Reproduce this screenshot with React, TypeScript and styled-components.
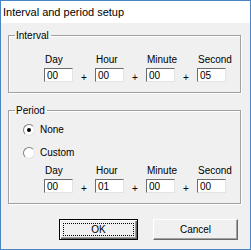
import { Fragment } from 'react';
import styled, { createGlobalStyle } from 'styled-components';

const GlobalStyle = createGlobalStyle`
    html, body {
        margin: 0;
        padding: 0;
        background: #ffffff;
    }
`

type Field = { label: string, value: string }

const intervalFields: Field[] = [
    { label: 'Day', value: '00' },
    { label: 'Hour', value: '00' },
    { label: 'Minute', value: '00' },
    { label: 'Second', value: '05' },
]

const periodFields: Field[] = [
    { label: 'Day', value: '00' },
    { label: 'Hour', value: '01' },
    { label: 'Minute', value: '00' },
    { label: 'Second', value: '00' },
]

const TimeRow = ({ fields }: { fields: Field[] }) => (
    <Row>
        {fields.map((f, i) => (
            <Fragment key={f.label}>
                {i > 0 && <Plus>+</Plus>}
                <FieldCol>
                    <FieldLabel>{f.label}</FieldLabel>
                    <TextBox defaultValue={f.value} />
                </FieldCol>
            </Fragment>
        ))}
    </Row>
)

export default function App() {
    return (
        <>
            <GlobalStyle />
            <Window>
                <TitleBar>Interval and period setup</TitleBar>
                <Body>
                    <Group>
                        <Legend>Interval</Legend>
                        <GroupInner $top={11}>
                            <TimeRow fields={intervalFields} />
                        </GroupInner>
                    </Group>
                    <Group $gap={11}>
                        <Legend>Period</Legend>
                        <GroupInner $top={6}>
                            <RadioRow>
                                <Radio $checked />
                                None
                            </RadioRow>
                            <RadioRow $gap={10}>
                                <Radio />
                                Custom
                            </RadioRow>
                            <Spacer />
                            <TimeRow fields={periodFields} />
                        </GroupInner>
                    </Group>
                    <ButtonBar>
                        <Button $default $width={79}><FocusRing>OK</FocusRing></Button>
                        <Button $width={85}>Cancel</Button>
                    </ButtonBar>
                </Body>
            </Window>
        </>
    )
}

const Window = styled.div`
    width: 251px;
    height: 250px;
    box-sizing: border-box;
    border: 1px solid #4a86c4;
    background: #f0f0f0;
    display: flex;
    flex-direction: column;
    font-family: "Liberation Sans", Arial, sans-serif;
    font-size: 10px;
    color: #000;
`

const TitleBar = styled.div`
    height: 22px;
    background: #ffffff;
    display: flex;
    align-items: center;
    padding-left: 2px;
    font-size: 11px;
`

const Body = styled.div`
    padding: 0 9px 0 7px;
    display: flex;
    flex-direction: column;
`

const Group = styled.fieldset<{ $gap?: number }>`
    margin: ${p => p.$gap ?? 6}px 0 0 0;
    padding: 0;
    border: 1px solid #a0a0a0;
    box-shadow: inset 1px 1px 0 #ffffff, 1px 1px 0 #ffffff;
    min-width: 0;
`

const Legend = styled.legend`
    margin-left: 6px;
    padding: 0 2px 0 1px;
    line-height: 13px;
`

const GroupInner = styled.div<{ $top: number }>`
    padding: ${p => p.$top}px 0 10px 35px;
    display: flex;
    flex-direction: column;
`

const Row = styled.div`
    display: flex;
    align-items: flex-end;
`

const FieldCol = styled.div`
    width: 29px;
    display: flex;
    flex-direction: column;
`

const FieldLabel = styled.span`
    line-height: 13px;
    margin: 0 0 2px 1px;
    white-space: nowrap;
`

const TextBox = styled.input`
    width: 29px;
    height: 14px;
    box-sizing: border-box;
    margin: 0;
    padding: 0 0 0 2px;
    border: 1px solid;
    border-color: #6d6d6d #e3e3e3 #e3e3e3 #6d6d6d;
    background: #ffffff;
    font-family: inherit;
    font-size: 10px;
    line-height: 12px;
    color: #000;
    outline: none;
`

const Plus = styled.span`
    width: 22px;
    text-align: center;
    line-height: 11px;
    margin-bottom: -1px;
`

const RadioRow = styled.div<{ $gap?: number }>`
    display: flex;
    align-items: center;
    gap: 5px;
    height: 13px;
    margin: ${p => p.$gap ?? 0}px 0 0 -21px;
`

const Radio = styled.span<{ $checked?: boolean }>`
    width: 12px;
    height: 12px;
    box-sizing: border-box;
    border-radius: 50%;
    border: 1px solid;
    border-color: #808080 #e3e3e3 #e3e3e3 #808080;
    background: #ffffff;
    display: flex;
    align-items: center;
    justify-content: center;

    &::after {
        content: '';
        width: 4px;
        height: 4px;
        border-radius: 50%;
        background: ${p => p.$checked ? '#000' : 'transparent'};
    }
`

const Spacer = styled.div`
    height: 5px;
`

const ButtonBar = styled.div`
    display: flex;
    justify-content: flex-end;
    gap: 15px;
    margin-top: 15px;
    padding-right: 3px;
`

const Button = styled.button<{ $default?: boolean, $width: number }>`
    width: ${p => p.$width}px;
    height: 21px;
    box-sizing: border-box;
    margin: 0;
    padding: 0;
    font-family: inherit;
    font-size: 10px;
    color: #000;
    background: #f0f0f0;
    border: 1px solid;
    border-color: ${p => p.$default ? '#000 #000 #000 #000' : '#ffffff #696969 #696969 #ffffff'};
    box-shadow: ${p => p.$default
        ? 'inset 1px 1px 0 #ffffff, inset -1px -1px 0 #696969, inset -2px -2px 0 #a0a0a0'
        : 'inset -1px -1px 0 #a0a0a0'};
    display: flex;
    align-items: center;
    justify-content: center;
`

const FocusRing = styled.span`
    flex: 1;
    align-self: stretch;
    margin: 3px;
    border: 1px dotted #000;
    display: flex;
    align-items: center;
    justify-content: center;
`
